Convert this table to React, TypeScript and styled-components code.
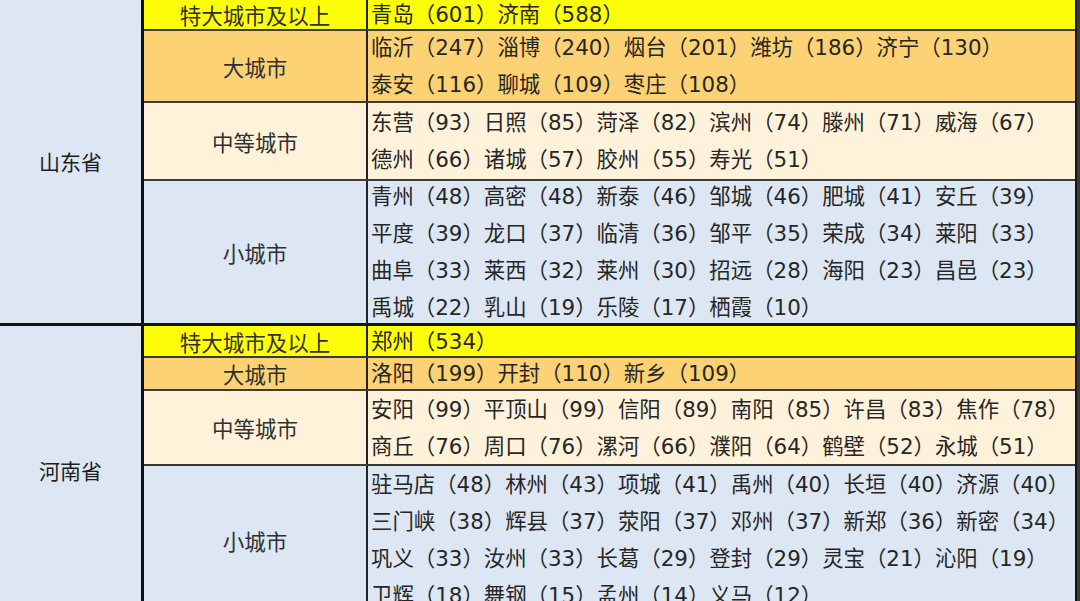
import { createGlobalStyle, styled } from "styled-components"

const Global = createGlobalStyle`
  html, body {
    margin: 0;
    padding: 0;
    background: #3a3a3a;
    overflow: hidden;
  }
  body {
    font-family: "DejaVu Sans", "Noto Sans CJK SC", sans-serif;
    color: #262626;
  }
`

type Tier = "huge" | "big" | "mid" | "small"

const tierBg: Record<Tier, string> = {
  huge: "#fefe0a",
  big: "#fdd274",
  mid: "#fff2db",
  small: "#dde7f3",
}

interface RowData {
  tier: Tier
  label: string
  h: number
  lines: string[]
}

interface ProvinceData {
  name: string
  rows: RowData[]
}

const provinces: ProvinceData[] = [
  {
    name: "山东省",
    rows: [
      { tier: "huge", label: "特大城市及以上", h: 30, lines: ["青岛（601）济南（588）"] },
      {
        tier: "big",
        label: "大城市",
        h: 70,
        lines: ["临沂（247）淄博（240）烟台（201）潍坊（186）济宁（130）", "泰安（116）聊城（109）枣庄（108）"],
      },
      {
        tier: "mid",
        label: "中等城市",
        h: 76,
        lines: ["东营（93）日照（85）菏泽（82）滨州（74）滕州（71）威海（67）", "德州（66）诸城（57）胶州（55）寿光（51）"],
      },
      {
        tier: "small",
        label: "小城市",
        h: 142,
        lines: [
          "青州（48）高密（48）新泰（46）邹城（46）肥城（41）安丘（39）",
          "平度（39）龙口（37）临清（36）邹平（35）荣成（34）莱阳（33）",
          "曲阜（33）莱西（32）莱州（30）招远（28）海阳（23）昌邑（23）",
          "禹城（22）乳山（19）乐陵（17）栖霞（10）",
        ],
      },
    ],
  },
  {
    name: "河南省",
    rows: [
      { tier: "huge", label: "特大城市及以上", h: 30, lines: ["郑州（534）"] },
      { tier: "big", label: "大城市", h: 31, lines: ["洛阳（199）开封（110）新乡（109）"] },
      {
        tier: "mid",
        label: "中等城市",
        h: 73,
        lines: ["安阳（99）平顶山（99）信阳（89）南阳（85）许昌（83）焦作（78）", "商丘（76）周口（76）漯河（66）濮阳（64）鹤壁（52）永城（51）"],
      },
      {
        tier: "small",
        label: "小城市",
        h: 148,
        lines: [
          "驻马店（48）林州（43）项城（41）禹州（40）长垣（40）济源（40）",
          "三门峡（38）辉县（37）荥阳（37）邓州（37）新郑（36）新密（34）",
          "巩义（33）汝州（33）长葛（29）登封（29）灵宝（21）沁阳（19）",
          "卫辉（18）舞钢（15）孟州（14）义马（12）",
        ],
      },
    ],
  },
]

const Sheet = styled.div`
  width: 1075px;
  margin-top: -1px;
  border-right: 2px solid #151515;
  background: #dde7f3;
`

const Section = styled.section`
  display: flex;
  border-bottom: 3px solid #141414;
`

const ProvinceCell = styled.div`
  width: 141px;
  flex: none;
  display: flex;
  align-items: center;
  justify-content: center;
  background: #dde7f3;
  border-right: 3px solid #111;
  font-size: 21px;
  color: #1e1e1e;
`

const Rows = styled.div`
  flex: 1;
  display: flex;
  flex-direction: column;
`

const Row = styled.div<{ $tier: Tier; $h: number }>`
  display: flex;
  height: ${(p) => p.$h}px;
  background: ${(p) => tierBg[p.$tier]};
  border-bottom: 2px solid #3a3a3a;

  &:last-child {
    border-bottom: none;
  }
`

const Category = styled.div`
  width: 222px;
  flex: none;
  display: flex;
  align-items: center;
  justify-content: center;
  border-right: 2px solid #222;
  font-size: 21.5px;
  color: #303030;
`

const Cities = styled.div`
  flex: 1;
  display: flex;
  flex-direction: column;
  justify-content: center;
  padding-left: 3px;
  font-size: 21.4px;
  line-height: 37px;
  white-space: nowrap;
  overflow: visible;
`

export default function App() {
  return (
    <>
      <Global />
      <Sheet>
        {provinces.map((prov) => (
          <Section key={prov.name}>
            <ProvinceCell>{prov.name}</ProvinceCell>
            <Rows>
              {prov.rows.map((row) => (
                <Row key={row.tier} $tier={row.tier} $h={row.h}>
                  <Category>{row.label}</Category>
                  <Cities>
                    {row.lines.map((line) => (
                      <div key={line}>{line}</div>
                    ))}
                  </Cities>
                </Row>
              ))}
            </Rows>
          </Section>
        ))}
      </Sheet>
    </>
  )
}
